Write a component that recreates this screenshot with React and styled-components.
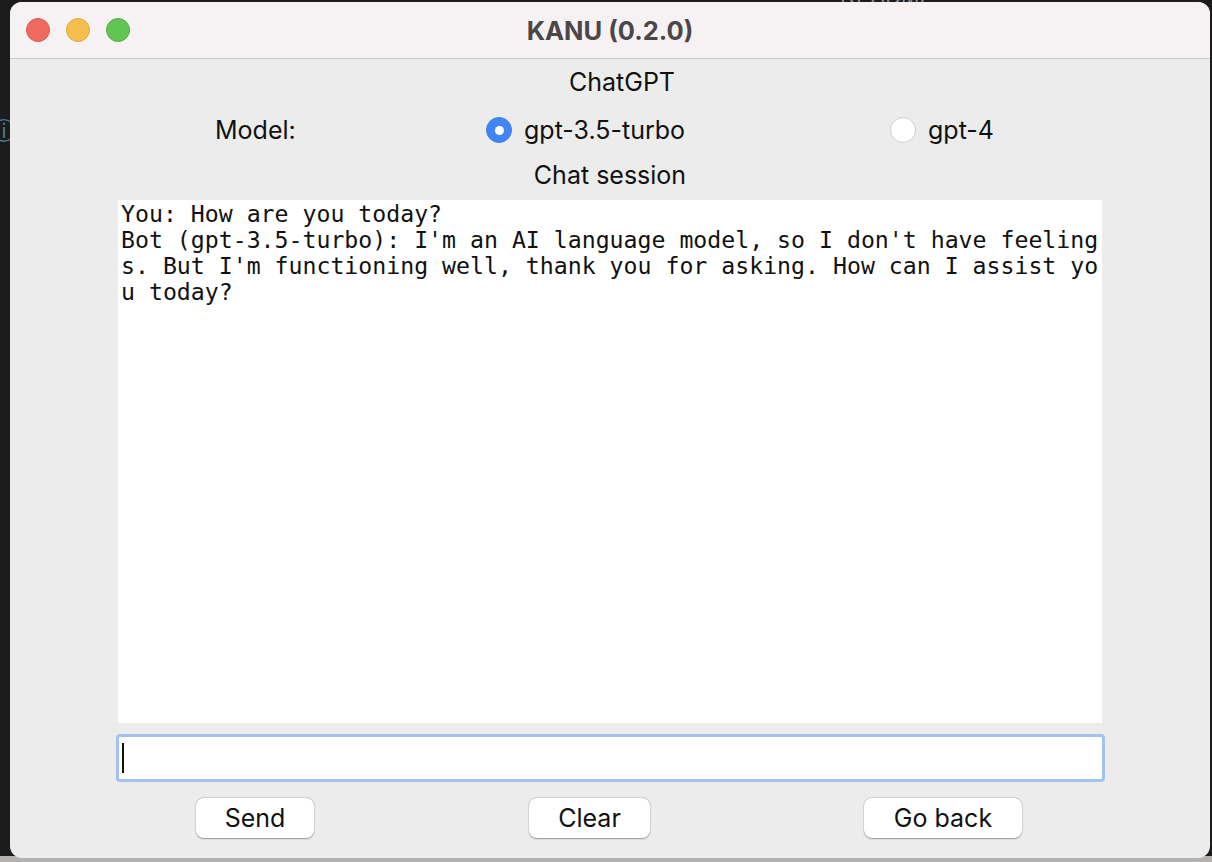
import React from "react";
import styled, { createGlobalStyle } from "styled-components";

const Global = createGlobalStyle`
  html, body { margin: 0; padding: 0; background: #1c1c1c; }
  body { font-family: Inter, "Open Sans", "Liberation Sans", sans-serif; }
  * { box-sizing: border-box; }
`;

const Desktop = styled.div`
  width: 1212px;
  height: 862px;
  overflow: hidden;
  position: relative;
  background: linear-gradient(to bottom, #1c1c1c 0, #1c1c1c 856px, #b4b1b1 856px);
  padding: 2px 2px 0 10px;
`;

const Behind = styled.div`
  position: absolute;
  left: ${(p) => p.x}px;
  top: ${(p) => p.y}px;
  color: ${(p) => p.color || "#8a8a8a"};
  font-size: ${(p) => p.size || 20}px;
  font-family: "Liberation Sans", sans-serif;
  white-space: nowrap;
`;

const Window = styled.div`
  position: relative;
  width: 1200px;
  height: 856px;
  background: #ececec;
  border-radius: 12px;
  overflow: hidden;
  display: flex;
  flex-direction: column;
`;

const TitleBar = styled.div`
  height: 57px;
  flex: none;
  background: #f6f2f3;
  border-bottom: 1px solid #cfcbcb;
  display: flex;
  align-items: center;
  position: relative;
`;

const Lights = styled.div`
  position: absolute;
  left: 16px;
  top: 16px;
  display: flex;
  gap: 16px;
`;

const Light = styled.span`
  width: 24px;
  height: 24px;
  border-radius: 50%;
  background: ${(p) => p.c};
  border: 1px solid ${(p) => p.b};
`;

const Title = styled.div`
  flex: 1;
  text-align: center;
  font-size: 25.5px;
  font-weight: 700;
  color: #4b4748;
  padding-top: 1px;
`;

const Body = styled.div`
  flex: 1;
  display: flex;
  flex-direction: column;
  padding: 10px 0 0 0;
  color: #111;
`;

const Heading = styled.div`
  height: 26px;
  line-height: 26px;
  text-align: center;
  font-size: 25px;
  padding-left: ${(p) => p.shift || 0}px;
`;

const ModelRow = styled.div`
  height: 30px;
  margin-top: 20px;
  display: flex;
  align-items: center;
  font-size: 25px;
  padding-left: 205px;
`;

const ModelLabel = styled.span`
  width: 271px;
`;

const Option = styled.label`
  display: flex;
  align-items: center;
  gap: 12px;
  width: ${(p) => p.w}px;
`;

const Radio = styled.span`
  width: 26px;
  height: 26px;
  border-radius: 50%;
  flex: none;
  display: flex;
  align-items: center;
  justify-content: center;
  background: ${(p) => (p.on ? "#3f86f4" : "#ffffff")};
  border: 1px solid ${(p) => (p.on ? "#3a7fe9" : "#cfcfcf")};
  &::after {
    content: "";
    display: ${(p) => (p.on ? "block" : "none")};
    width: 9px;
    height: 9px;
    border-radius: 50%;
    background: #fff;
  }
`;

const SessionTitle = styled(Heading)`
  margin-top: 17px;
`;

const Transcript = styled.div`
  margin: 12px 0 0 108px;
  width: 984px;
  height: 523px;
  background: #fff;
  padding: 1px 3px;
  font-family: "DejaVu Sans Mono", "Liberation Mono", monospace;
  font-size: 23.2px;
  line-height: 26px;
  color: #111;
  white-space: pre;
`;

const Input = styled.div`
  margin: 11px 0 0 106px;
  width: 989px;
  height: 48px;
  background: #fff;
  border: 3px solid #a3c2ef;
  border-radius: 4px;
  display: flex;
  align-items: center;
  padding-left: 3px;
`;

const Caret = styled.span`
  width: 2px;
  height: 30px;
  background: #111;
`;

const ButtonRow = styled.div`
  margin-top: 16px;
  display: flex;
  padding-left: 186px;
`;

const Button = styled.button`
  width: ${(p) => p.w}px;
  height: 40px;
  margin-left: ${(p) => p.ml || 0}px;
  background: #fff;
  border: none;
  border-radius: 8px;
  box-shadow: 0 0.5px 1.5px rgba(0, 0, 0, 0.35), 0 0 0 0.5px rgba(0,0,0,0.08);
  font-family: Inter, "Open Sans", "Liberation Sans", sans-serif;
  font-size: 25px;
  color: #111;
  padding: 0;
`;

const transcript = `You: How are you today?
Bot (gpt-3.5-turbo): I'm an AI language model, so I don't have feeling
s. But I'm functioning well, thank you for asking. How can I assist yo
u today?`;

export default function App() {
  return (
    <>
      <Global />
      <Desktop>
        <Behind x={840} y={-16} color="#8c8c8c" size={22}>README</Behind>
        <Behind x={-8} y={115} color="#4f87a8" size={24}>ⓘ</Behind>
        <Window>
          <TitleBar>
            <Lights>
              <Light c="#ef6a5e" b="#dc5a50" />
              <Light c="#f6be4f" b="#e0a93e" />
              <Light c="#61c554" b="#52ad46" />
            </Lights>
            <Title>KANU (0.2.0)</Title>
          </TitleBar>
          <Body>
            <Heading shift={24}>ChatGPT</Heading>
            <ModelRow>
              <ModelLabel>Model:</ModelLabel>
              <Option w={404}>
                <Radio on />
                gpt-3.5-turbo
              </Option>
              <Option w={160}>
                <Radio />
                gpt-4
              </Option>
            </ModelRow>
            <SessionTitle>Chat session</SessionTitle>
            <Transcript>{transcript}</Transcript>
            <Input>
              <Caret />
            </Input>
            <ButtonRow>
              <Button w={118}>Send</Button>
              <Button w={121} ml={215}>Clear</Button>
              <Button w={158} ml={214}>Go back</Button>
            </ButtonRow>
          </Body>
        </Window>
      </Desktop>
    </>
  );
}
